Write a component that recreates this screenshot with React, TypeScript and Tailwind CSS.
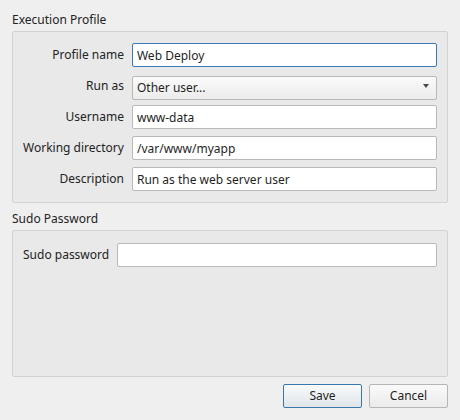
import { useEffect, useRef, useState } from 'react';

const FONT = { fontFamily: '"Noto Sans", "Open Sans", sans-serif' };

const inputCls =
  'h-6 w-full rounded-[2px] border border-[#b9b9b9] bg-white px-1 text-[12px] leading-4 text-[#1f1f1f] caret-black outline-none focus:border-[#3a7ab8]';

function Label({ children }: { children: string }) {
  return <label className="text-right text-[12px] leading-4 whitespace-nowrap text-[#232323]">{children}</label>;
}

export default function App() {
  const [name, setName] = useState('Web Deploy');
  const [runAs, setRunAs] = useState('Other user...');
  const [username, setUsername] = useState('www-data');
  const [workdir, setWorkdir] = useState('/var/www/myapp');
  const [desc, setDesc] = useState('Run as the web server user');
  const [sudo, setSudo] = useState('');
  const nameRef = useRef<HTMLInputElement>(null);

  // focus profile name with caret at the end
  useEffect(() => {
    const el = nameRef.current;
    if (!el) return;
    el.focus();
    el.setSelectionRange(el.value.length, el.value.length);
  }, []);

  return (
    <div className="flex h-[420px] w-[460px] flex-col bg-[#efefef] px-3 pt-3 pb-3 text-[#232323]" style={FONT}>
      <div className="h-4 text-[12px] leading-4">Execution Profile</div>

      {/* Execution profile group */}
      <div className="mt-[3px] rounded-[2px] border border-[#d2d2d2] bg-[#e9e9e9] pt-[11px] pr-[10px] pb-[11px] pl-[10px]">
        <div className="grid grid-cols-[auto_1fr] items-center gap-x-2 gap-y-[7px]">
          <Label>Profile name</Label>
          <input
            ref={nameRef}
            value={name}
            onChange={(e) => setName(e.target.value)}
            className={inputCls + ' border-[#3a7ab8]'}
          />

          <Label>Run as</Label>
          <div className="relative h-6">
            <select
              value={runAs}
              onChange={(e) => setRunAs(e.target.value)}
              className="h-6 w-full appearance-none rounded-[2px] border border-[#b9b9b9] bg-gradient-to-b from-[#fafafa] to-[#ececec] px-1 text-[12px] leading-4 text-[#1f1f1f] outline-none"
            >
              <option>Current user</option>
              <option>Other user...</option>
            </select>
            <div className="pointer-events-none absolute top-[10px] right-[8px] h-0 w-0 border-x-[3.5px] border-t-[4px] border-x-transparent border-t-[#4a4a4a]" />
          </div>

          <Label>Username</Label>
          <input value={username} onChange={(e) => setUsername(e.target.value)} className={inputCls} />

          <Label>Working directory</Label>
          <input value={workdir} onChange={(e) => setWorkdir(e.target.value)} className={inputCls} />

          <Label>Description</Label>
          <input value={desc} onChange={(e) => setDesc(e.target.value)} className={inputCls} />
        </div>
      </div>

      <div className="mt-2 h-4 text-[12px] leading-4">Sudo Password</div>

      {/* Sudo group */}
      <div className="mt-[3px] flex-1 rounded-[2px] border border-[#d2d2d2] bg-[#e9e9e9] pt-3 pr-[10px] pl-[10px]">
        <div className="flex items-center gap-2">
          <Label>Sudo password</Label>
          <input type="password" value={sudo} onChange={(e) => setSudo(e.target.value)} className={inputCls} />
        </div>
      </div>

      <div className="mt-[7px] flex justify-end gap-[7px]">
        <button className="h-6 w-[79px] rounded-[2px] border border-[#3b78aa] bg-gradient-to-b from-[#f9fafb] to-[#dfe5ea] text-[12px] leading-4 text-[#1f1f1f]">
          Save
        </button>
        <button className="h-6 w-[79px] rounded-[2px] border border-[#b6b6b6] bg-gradient-to-b from-[#fafafa] to-[#ebebeb] text-[12px] leading-4 text-[#1f1f1f]">
          Cancel
        </button>
      </div>
    </div>
  );
}
